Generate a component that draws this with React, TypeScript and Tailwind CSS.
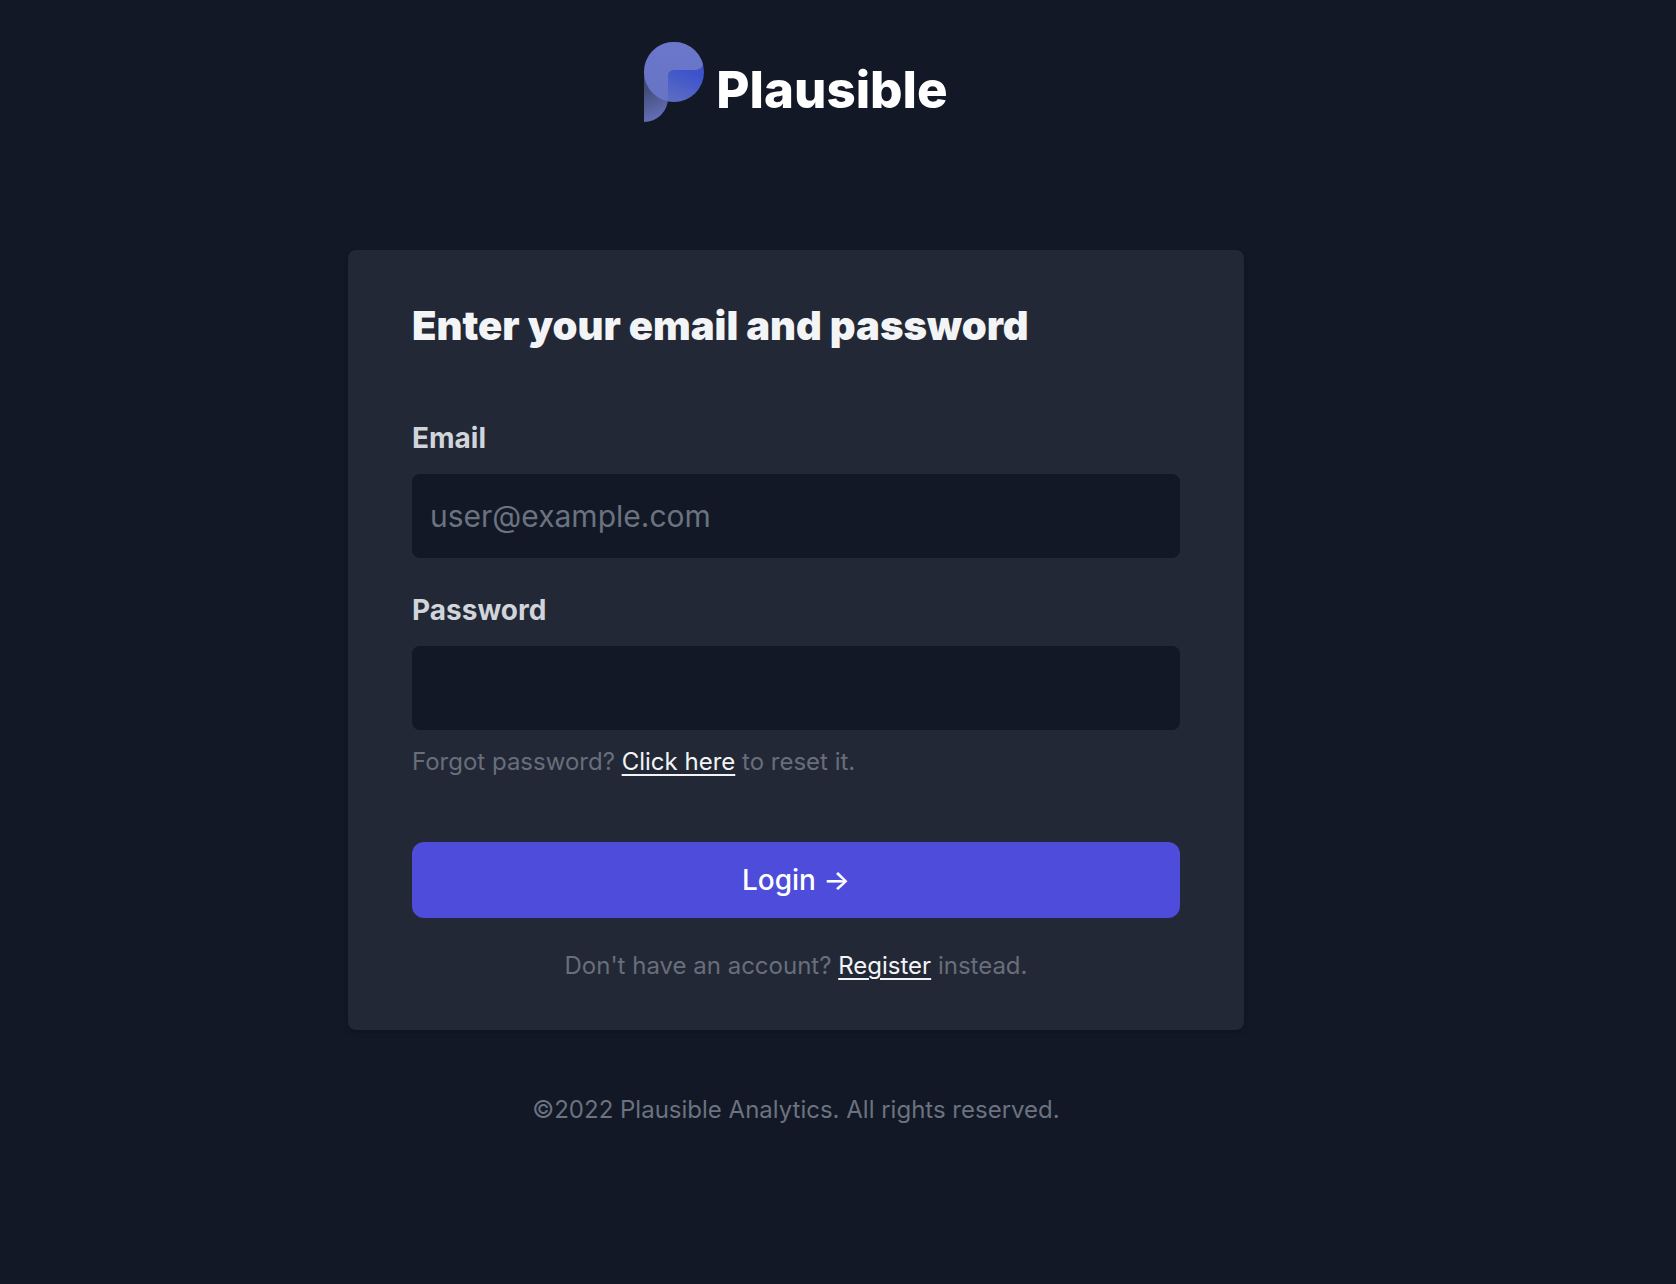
function LogoMark() {
  return (
    <svg viewBox="0 0 60 80" className="h-20 w-15 shrink-0" aria-hidden="true">
      <defs>
        <linearGradient id="disc" x1="42" y1="28" x2="28" y2="62" gradientUnits="userSpaceOnUse">
          <stop offset="0" stopColor="#3d53cb" />
          <stop offset="1" stopColor="#5f6fc2" />
        </linearGradient>
        <linearGradient id="tail" x1="2" y1="46" x2="15" y2="74" gradientUnits="userSpaceOnUse">
          <stop offset="0" stopColor="#414c78" />
          <stop offset="1" stopColor="#626db3" />
        </linearGradient>
        <linearGradient id="cap" x1="30" y1="0" x2="20" y2="60" gradientUnits="userSpaceOnUse">
          <stop offset="0" stopColor="#6b77cb" />
          <stop offset="1" stopColor="#6773c4" />
        </linearGradient>
        <clipPath id="leaf">
          <path d="M0 30A30 30 0 0 1 59 22C58.500 25.500 55 28 51 28H30a6 6 0 0 0-6 6V56A24 24 0 0 1 0 80Z" />
        </clipPath>
      </defs>
      <circle cx="30" cy="30" r="30" fill="url(#disc)" />
      <g clipPath="url(#leaf)">
        <rect width="60" height="80" fill="url(#tail)" />
        <circle cx="30" cy="30" r="30" fill="url(#cap)" />
      </g>
    </svg>
  );
}

const inputClass =
  "mt-4 block h-21 w-full rounded-lg bg-[#121825] px-[18px] text-[30px] text-gray-100 placeholder:text-[#6b7280] focus:outline-none";
const labelClass = "block text-[28px] leading-10 font-bold text-[#d1d5db]";
const noteClass = "text-2xl leading-8 text-[#686e7b]";
const linkClass = "text-[#f3f4f6] underline decoration-2 underline-offset-4";

export default function App() {
  return (
    <div className="min-h-screen bg-[#121825] pt-[42px] pr-[84px] pb-16 font-['Inter',sans-serif]">
      <header className="flex justify-center">
        <a href="#" className="flex items-start gap-3">
          <LogoMark />
          <span className="mt-4 text-[51px] leading-16 font-extrabold text-white">Plausible</span>
        </a>
      </header>
      <main className="mx-auto mt-32 max-w-4xl">
        <form className="rounded-lg bg-[#222835] px-16 py-12 shadow-md">
          <h1 className="text-[40px] leading-14 font-black text-[#f3f4f6]">Enter your email and password</h1>
          <div className="mt-16">
            <label htmlFor="email" className={labelClass}>Email</label>
            <input id="email" type="email" placeholder="user@example.com" className={inputClass} />
          </div>
          <div className="mt-8">
            <label htmlFor="password" className={labelClass}>Password</label>
            <input id="password" type="password" className={inputClass} />
            <p className={`${noteClass} mt-4`}>
              Forgot password? <a href="#" className={linkClass}>Click here</a> to reset it.
            </p>
          </div>
          <button type="button" className="mt-16 h-19 w-full rounded-xl bg-[#4d4cdb] text-[28px] leading-10 font-medium text-white">
            Login →
          </button>
          <p className={`${noteClass} mt-8 text-center`}>
            Don't have an account? <a href="#" className={linkClass}>Register</a> instead.
          </p>
        </form>
      </main>
      <footer className="mt-16 text-center text-2xl leading-8 text-[#6b7280]">
        ©2022 Plausible Analytics. All rights reserved.
      </footer>
    </div>
  );
}
